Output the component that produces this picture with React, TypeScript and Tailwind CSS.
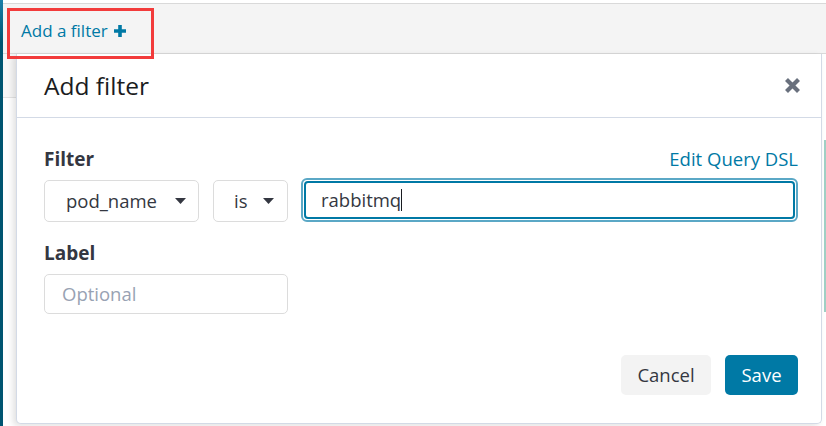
/**
 * Add filter popover
 */

const Caret = () => (
  <svg width="11" height="6" viewBox="0 0 11 6" className="shrink-0">
    <path d="M0 0h11L5.5 6z" fill="#343741" />
  </svg>
);

export default function App() {
  return (
    <div className="relative flex h-[426px] w-[826px] overflow-hidden bg-white font-['Open_Sans',sans-serif] text-[#343741]">
      {/* side nav edge */}
      <div className="w-[3px] shrink-0 bg-gradient-to-b from-[#1b7fa8] from-[0%] via-[#005571] via-[10%] to-[#005571]" />

      <div className="flex flex-1 flex-col">
        <div className="h-[3px] bg-white" />

        {/* filter bar */}
        <div className="flex h-[51px] items-start border-y border-[#d9d9d9] bg-[#f4f4f4] pl-[18px] pt-[15px]">
          <button className="flex items-center gap-[5px] text-[17px] leading-[24px] text-[#0079a5]">
            Add a filter
            <svg width="14" height="14" viewBox="0 0 14 14">
              <path d="M7 1v12M1 7h12" stroke="#0079a5" strokeWidth="3.6" />
            </svg>
          </button>
        </div>

        <div className="flex flex-1">
          <div className="w-[13px] shrink-0">
            <div className="h-[44px] border-b border-[#e3e3e3] bg-[#f7f7f7]" />
          </div>

          {/* modal */}
          <div className="flex h-[370px] w-[806px] shrink-0 flex-col rounded-b-[5px] border border-t-0 border-[#d3dae6] bg-white shadow-[-3px_2px_6px_rgba(0,0,0,0.12)]">
            <div className="flex h-[64px] items-center justify-between border-b border-[#d3dae6] pl-[27px] pr-[20px]">
              <h2 className="text-[24.5px] leading-[32px] text-[#1a1c21]">Add filter</h2>
              <svg width="17" height="17" viewBox="0 0 17 17">
                <path d="M2.5 2.5l12 12M14.5 2.5l-12 12" stroke="#69707d" strokeWidth="4.2" />
              </svg>
            </div>

            <div className="flex flex-1 flex-col pl-[27px] pr-[23px] pt-[29px]">
              <div className="flex items-center justify-between">
                <span className="text-[19px] leading-[24px] font-bold">Filter</span>
                <a className="whitespace-nowrap text-[18.5px] leading-[24px] text-[#0079a5]">Edit Query DSL</a>
              </div>

              <div className="mt-[7px] flex items-start gap-[13px]">
                <div className="mt-[2px] flex h-[42px] w-[155px] items-center justify-between rounded-[5px] border border-[#dcdcdc] pl-[21px] pr-[12px] text-[18.5px]">
                  <span>pod_name</span>
                  <Caret />
                </div>
                <div className="ml-[1px] mt-[2px] flex h-[42px] w-[75px] items-center justify-between rounded-[5px] border border-[#dcdcdc] pl-[20px] pr-[13px] text-[18.5px]">
                  <span>is</span>
                  <Caret />
                </div>
                <div className="flex h-[44px] flex-1 items-center rounded-[6px] border-2 border-[#5ba8c6] p-[1px]">
                  <div className="flex h-full w-full items-center rounded-[4px] border-2 border-[#0079a5] pl-[15px] text-[18.5px]">
                    <span>rabbitmq</span>
                    <span className="h-[22px] w-px bg-[#1a1c21]" />
                  </div>
                </div>
              </div>

              <span className="mt-[19px] text-[19px] leading-[24px] font-bold">Label</span>
              <div className="mt-[9px] flex h-[40px] w-[244px] items-center rounded-[5px] border border-[#dcdcdc] pl-[17px] text-[18.5px] text-[#98a2b3]">
                Optional
              </div>

              <div className="mt-auto mb-[28px] flex justify-end gap-[14px]">
                <button className="h-[40px] w-[90px] rounded-[5px] bg-[#f3f3f3] text-[18.5px] text-[#343741]">
                  Cancel
                </button>
                <button className="h-[40px] w-[73px] rounded-[5px] bg-[#0079a5] text-[18.5px] text-white">
                  Save
                </button>
              </div>
            </div>
          </div>

          <div className="flex flex-1 justify-end pt-[86px]">
            <div className="h-[172px] w-[2px] bg-[#9fcfc4]" />
          </div>
        </div>
      </div>

      {/* annotation */}
      <div className="absolute left-[7px] top-[8px] h-[51px] w-[147px] border-[3px] border-[#f23b3b]" />
    </div>
  );
}
